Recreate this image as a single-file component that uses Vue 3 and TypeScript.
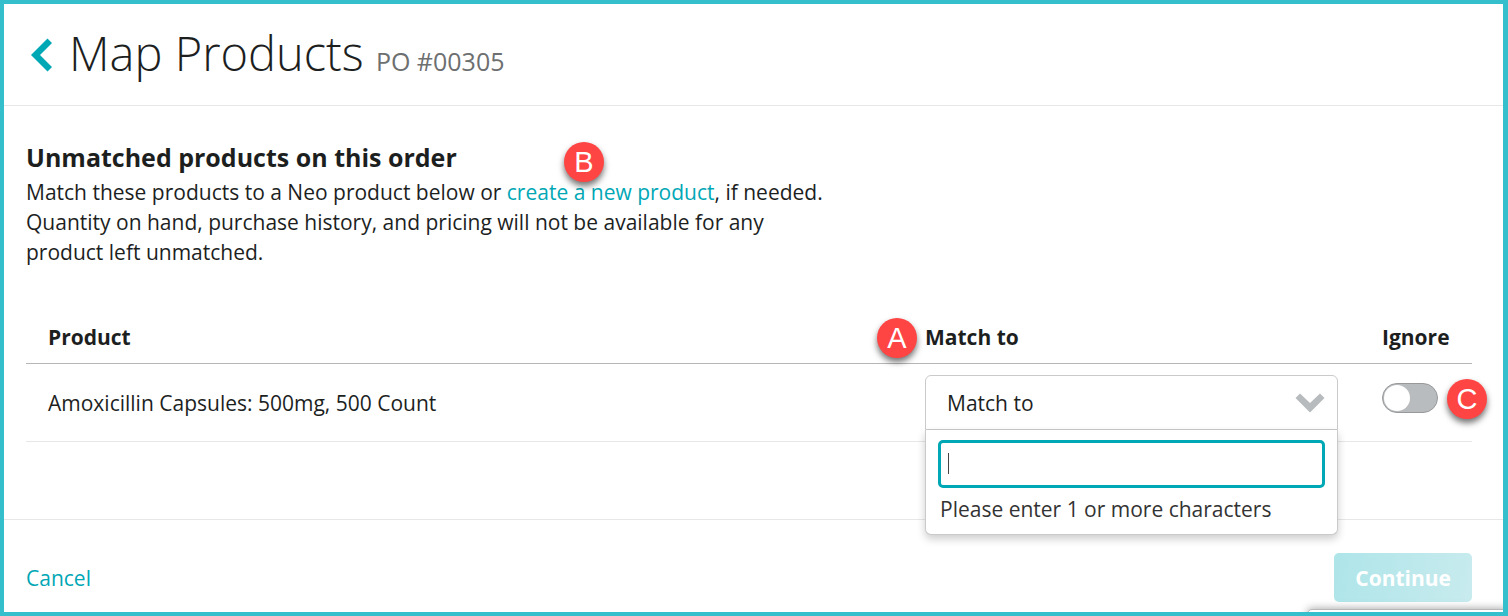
<script setup lang="ts">
import { onMounted, ref } from 'vue'

interface OrderProduct {
  id: number
  name: string
}

const orderNumber = 'PO #00305'
const products: OrderProduct[] = [{ id: 1, name: 'Amoxicillin Capsules: 500mg, 500 Count' }]

const query = ref('')
const ignored = ref<number[]>([])
const searchBox = ref<HTMLInputElement[]>([])

onMounted(() => searchBox.value[0]?.focus())
</script>

<template>
  <div class="page">
    <header class="page-header">
      <a class="back" href="#" aria-label="Back">
        <svg width="22" height="34" viewBox="0 0 22 34" aria-hidden="true">
          <path d="M16.500 0.500L21 5L9 17L21 29L16.500 33.500L0 17Z" />
        </svg>
      </a>
      <h1>Map Products <small>{{ orderNumber }}</small></h1>
    </header>

    <main>
      <section class="intro">
        <h2>Unmatched products on this order</h2>
        <p>
          Match these products to a Neo product below or
          <span class="anchor"><a href="#">create a new product</a><span class="badge badge-b">B</span></span>, if
          needed. Quantity on hand, purchase history, and pricing will not be available for any product left
          unmatched.
        </p>
      </section>

      <table>
        <thead>
          <tr>
            <th scope="col" class="col-product">Product</th>
            <th scope="col" class="col-match">
              <div class="anchor"><span id="match-label">Match to</span><span class="badge badge-a">A</span></div>
            </th>
            <th scope="col" class="col-ignore">Ignore</th>
          </tr>
        </thead>
        <tbody>
          <tr v-for="product in products" :key="product.id">
            <td>{{ product.name }}</td>
            <td>
              <div class="match">
                <select aria-labelledby="match-label">
                  <option>Match to</option>
                </select>
                <svg class="chevron" width="30" height="20" viewBox="0 0 30 20" aria-hidden="true">
                  <path d="M0.500 5L5 0.500L15 10L25 0.500L29.500 5L15 19.500Z" />
                </svg>
                <div class="dropdown">
                  <div class="search">
                    <input
                      ref="searchBox"
                      v-model="query"
                      type="text"
                      aria-label="Search products"
                      aria-describedby="search-hint"
                    />
                    <span v-if="!query" class="caret" aria-hidden="true"></span>
                  </div>
                  <p id="search-hint">Please enter 1 or more characters</p>
                </div>
              </div>
            </td>
            <td>
              <div class="ignore">
                <input v-model="ignored" type="checkbox" class="toggle" :value="product.id" aria-label="Ignore" />
                <span class="badge badge-c">C</span>
              </div>
            </td>
          </tr>
        </tbody>
      </table>
    </main>

    <footer>
      <a href="#">Cancel</a>
      <button type="button" disabled>Continue</button>
    </footer>
    <div class="corner-panel" aria-hidden="true"></div>
  </div>
</template>

<style>
body {
  margin: 0;
}
</style>

<style scoped>
.page,
.page * {
  box-sizing: border-box;
}

.page {
  position: relative;
  display: flex;
  flex-direction: column;
  min-height: 100vh;
  overflow: hidden;
  border: 4px solid #35bfcd;
  border-right-width: 5px;
  background: #fff;
  color: #1d1f1f;
  font-family: 'Open Sans', sans-serif;
  font-size: 21px;
  line-height: 30px;
}

a {
  color: #00a7b5;
  text-decoration: none;
}

h1,
h2,
p {
  margin: 0;
}

.page-header {
  display: flex;
  align-items: center;
  gap: 16px;
  padding: 16px 27px 19px;
  border-bottom: 1px solid #e6e8e8;
}

.back {
  display: flex;
  padding-top: 3px;
}

.back svg {
  fill: #00a7b5;
}

h1 {
  font-size: 47px;
  font-weight: 300;
  line-height: 66px;
}

h1 small {
  color: #6d6f70;
  font-size: 25px;
  font-weight: 400;
  line-height: 1;
}

main {
  flex: 1;
  padding: 35px 31px 0 22px;
  border-bottom: 1px solid #e6e8e8;
}

.intro {
  max-width: 800px;
}

h2 {
  margin-bottom: 4px;
  font-size: 25px;
  font-weight: 700;
  line-height: 32px;
}

.anchor {
  position: relative;
}

.badge {
  position: absolute;
  z-index: 2;
  width: 40px;
  height: 40px;
  border-radius: 50%;
  background: #ff4444;
  box-shadow: 0 4px 6px rgba(0, 0, 0, 0.55);
  color: #fff;
  font: 29px/40px 'Liberation Sans', sans-serif;
  text-align: center;
}

.badge-a {
  top: -4px;
  left: -48px;
}

.badge-b {
  bottom: 24px;
  left: 57px;
}

.badge-c {
  top: -4px;
  left: 65px;
}

table {
  width: 100%;
  margin-top: 45px;
  border-collapse: separate;
  border-spacing: 0;
  table-layout: fixed;
}

th {
  padding: 10px 22px 11px;
  border-bottom: 1px solid #b4b6b7;
  font-weight: 700;
  text-align: left;
}

td {
  height: 78px;
  padding: 11px 22px;
  border-bottom: 1px solid #e6e8e8;
}

.col-match {
  width: 457px;
}

.col-ignore {
  width: 112px;
  padding-right: 0;
}

.match {
  position: relative;
}

select {
  display: block;
  width: 100%;
  height: 55px;
  padding: 0 48px 0 21px;
  border: 1px solid #c8cacb;
  border-radius: 6px 6px 0 0;
  outline: 0;
  background: #fff;
  color: inherit;
  font: inherit;
  appearance: none;
}

.chevron {
  position: absolute;
  top: 18px;
  right: 13px;
  fill: #b7bbbe;
  pointer-events: none;
}

.dropdown {
  position: absolute;
  z-index: 1;
  top: 100%;
  right: 0;
  left: 0;
  padding: 10px 12px;
  border: 1px solid #c8cacb;
  border-top: 0;
  border-radius: 0 0 6px 6px;
  background: #fff;
  box-shadow: 0 4px 8px rgba(0, 0, 0, 0.2);
}

.search {
  position: relative;
}

.search input {
  display: block;
  width: 100%;
  height: 48px;
  padding: 0 8px;
  border: 3px solid #00a7b5;
  border-radius: 5px;
  outline: 0;
  color: inherit;
  caret-color: transparent;
  font: inherit;
}

.caret {
  position: absolute;
  top: 13px;
  left: 10px;
  width: 1px;
  height: 21px;
  background: #444;
}

.dropdown p {
  margin: 6px 2px 0;
  color: #333;
}

.ignore {
  position: relative;
  height: 40px;
}

.toggle {
  display: block;
  width: 56px;
  height: 30px;
  margin: 0;
  padding: 1px;
  border: 1px solid #97999b;
  border-radius: 15px;
  background: #b9bcbe;
  appearance: none;
}

.toggle::before {
  display: block;
  width: 26px;
  height: 26px;
  border-radius: 50%;
  background: #fff;
  content: '';
}

.toggle:checked {
  padding-left: 27px;
  background: #00a7b5;
}

footer {
  display: flex;
  align-items: center;
  justify-content: space-between;
  padding: 33px 31px 10px 22px;
}

footer button {
  height: 49px;
  padding: 0 21px;
  border: 0;
  border-radius: 5px;
  background: linear-gradient(100deg, #aee5e9, #c8ebee);
  color: #fff;
  font: inherit;
  font-weight: 700;
}

.corner-panel {
  position: absolute;
  right: -5px;
  bottom: -5px;
  width: 201px;
  height: 8px;
  border: 1px solid #b8b8b8;
  border-radius: 5px 0 0 0;
  background: #fff;
  box-shadow: 0 0 8px rgba(0, 0, 0, 0.4);
}
</style>
